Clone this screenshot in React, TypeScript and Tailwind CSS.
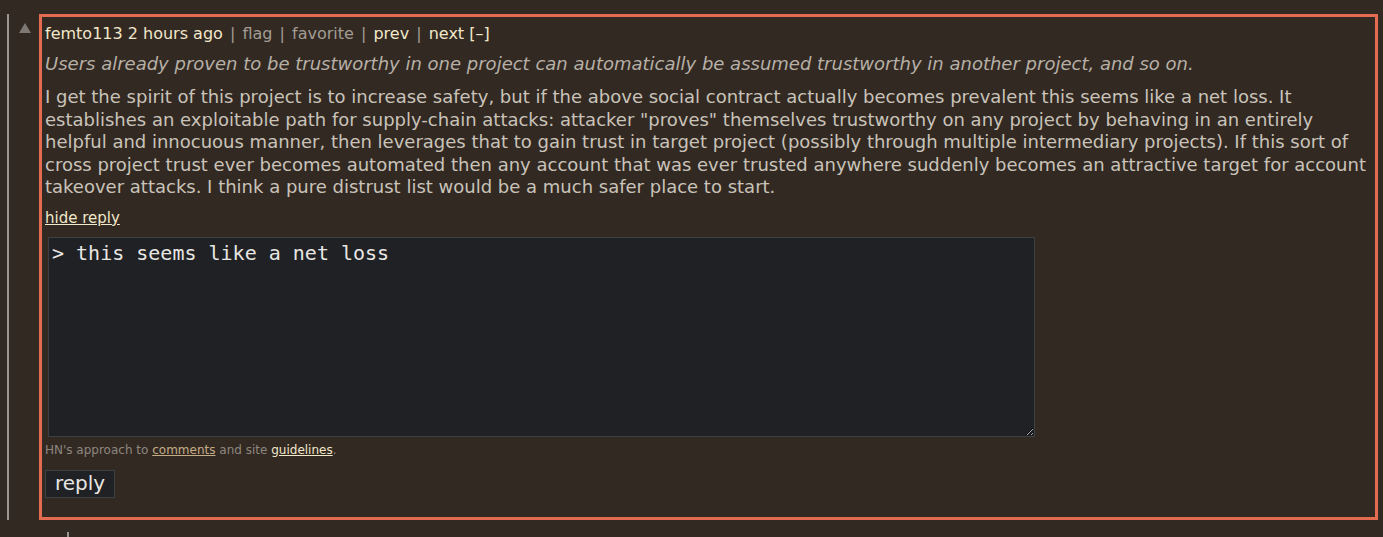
import React from 'react';

const body = `I get the spirit of this project is to increase safety, but if the above social contract actually becomes prevalent this seems like a net loss. It establishes an exploitable path for supply-chain attacks: attacker "proves" themselves trustworthy on any project by behaving in an entirely helpful and innocuous manner, then leverages that to gain trust in target project (possibly through multiple intermediary projects). If this sort of cross project trust ever becomes automated then any account that was ever trusted anywhere suddenly becomes an attractive target for account takeover attacks. I think a pure distrust list would be a much safer place to start.`;

const Sep = () => <span className="mx-[2px] text-[#a39c92]"> | </span>;

const App = () => {
  return (
    <div className="h-[537px] w-full overflow-hidden bg-[#322923] font-['DejaVu_Sans',Verdana,sans-serif]">
      <div className="flex pl-[7px] pt-[14px]">
        <div className="h-[506px] w-[2px] bg-[#9a9590]" />
        <div className="ml-[10px] pt-[9px]">
          <svg width="12" height="10" viewBox="0 0 12 10">
            <polygon points="6,0 12,10 0,10" fill="#7d7873" />
          </svg>
        </div>
        <div className="ml-[8px] h-[506px] w-[1339px] border-[3px] border-[#e36b4f] px-[3px] pt-[7px]">
          <div className="text-[16px] leading-[20px] text-[#f1e7c9]">
            <span>femto113 2 hours ago</span>
            <Sep />
            <span className="text-[#a39c92]">flag</span>
            <Sep />
            <span className="text-[#a39c92]">favorite</span>
            <Sep />
            <span>prev</span>
            <Sep />
            <span>next [–]</span>
          </div>
          <p className="mt-[9px] text-[18px] leading-[22px] italic text-[#b7b0a6]">
            Users already proven to be trustworthy in one project can automatically be assumed trustworthy in another project, and so on.
          </p>
          <p className="mt-[11px] text-[18px] leading-[22.5px] text-[#c9c3b9]">{body}</p>
          <div className="mt-[10px] text-[15px] leading-[18px] text-[#f1e7c9] underline">hide reply</div>
          <textarea
            className="ml-[3px] mt-[10px] block h-[200px] w-[987px] border border-[#3c3f43] bg-[#1f2124] px-[3px] py-[3px] font-['DejaVu_Sans_Mono',monospace] text-[20px] leading-[24px] text-[#e8e6e3] outline-none"
            defaultValue="> this seems like a net loss"
          />
          <div className="mt-[6px] text-[12px] leading-[14px] text-[#8d877f]">
            HN's approach to{' '}
            <span className="text-[#c4ad86] underline">comments</span> and site{' '}
            <span className="text-[#f1e7c9] underline">guidelines</span>.
          </div>
          <button className="mt-[13px] block border border-[#3c3f43] bg-[#1f2124] px-[9px] pb-[3px] pt-[1px] text-[20px] leading-[22px] text-[#e8e6e3]">
            reply
          </button>
        </div>
      </div>
      <div className="ml-[67px] mt-[12px] h-[10px] w-[2px] bg-[#9a9590]" />
    </div>
  );
};

export default App;
